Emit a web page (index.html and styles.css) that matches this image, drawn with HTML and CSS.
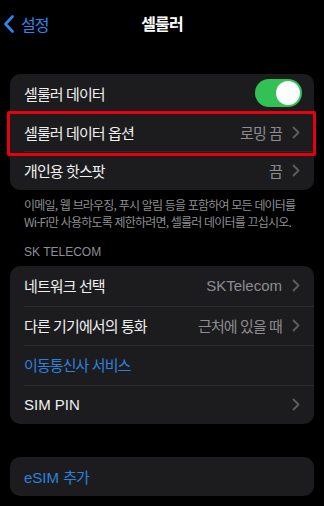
FILE: index.html
```html
<!DOCTYPE html>
<html lang="ko">
<head>
<meta charset="utf-8">
<link rel="stylesheet" href="styles.css">
</head>
<body>
<div class="screen">
  <header class="nav">
    <div class="back">
      <svg class="back-icon" width="12" height="18" viewBox="0 0 12 18"><path d="M9.5 1.5 L2.5 9 L9.5 16.5" fill="none" stroke="#2f86f0" stroke-width="2.6" stroke-linecap="round" stroke-linejoin="round"/></svg>
      <span class="back-label ko">설정</span>
    </div>
    <h1 class="title ko">셀룰러</h1>
    <div></div>
  </header>

  <section class="group g1">
    <div class="row">
      <span class="label ko">셀룰러 데이터</span>
      <span class="toggle"><span class="knob"></span></span>
    </div>
    <div class="row sep highlighted">
      <span class="label ko">셀룰러 데이터 옵션</span>
      <span class="value ko">로밍 끔</span>
      <svg class="chev" width="8" height="13" viewBox="0 0 8 13"><path d="M1.5 1.5 L6.5 6.5 L1.5 11.5" fill="none" stroke="#5d5d62" stroke-width="1.8" stroke-linecap="round" stroke-linejoin="round"/></svg>
      <span class="outline"></span>
    </div>
    <div class="row sep">
      <span class="label ko">개인용 핫스팟</span>
      <span class="value ko">끔</span>
      <svg class="chev" width="8" height="13" viewBox="0 0 8 13"><path d="M1.5 1.5 L6.5 6.5 L1.5 11.5" fill="none" stroke="#5d5d62" stroke-width="1.8" stroke-linecap="round" stroke-linejoin="round"/></svg>
    </div>
  </section>

  <p class="footnote ko">이메일, 웹 브라우징, 푸시 알림 등을 포함하여 모든 데이터를 <span class="nowrap">Wi-Fi만</span> 사용하도록 제한하려면, 셀룰러 데이터를 끄십시오.</p>

  <p class="section-head">SK TELECOM</p>

  <section class="group g2">
    <div class="row">
      <span class="label ko">네트워크 선택</span>
      <span class="value latin">SKTelecom</span>
      <svg class="chev" width="8" height="13" viewBox="0 0 8 13"><path d="M1.5 1.5 L6.5 6.5 L1.5 11.5" fill="none" stroke="#5d5d62" stroke-width="1.8" stroke-linecap="round" stroke-linejoin="round"/></svg>
    </div>
    <div class="row sep">
      <span class="label ko">다른 기기에서의 통화</span>
      <span class="value ko">근처에 있을 때</span>
      <svg class="chev" width="8" height="13" viewBox="0 0 8 13"><path d="M1.5 1.5 L6.5 6.5 L1.5 11.5" fill="none" stroke="#5d5d62" stroke-width="1.8" stroke-linecap="round" stroke-linejoin="round"/></svg>
    </div>
    <div class="row sep">
      <span class="label link ko">이동통신사 서비스</span>
    </div>
    <div class="row sep">
      <span class="label latin">SIM PIN</span>
      <svg class="chev" width="8" height="13" viewBox="0 0 8 13"><path d="M1.5 1.5 L6.5 6.5 L1.5 11.5" fill="none" stroke="#5d5d62" stroke-width="1.8" stroke-linecap="round" stroke-linejoin="round"/></svg>
    </div>
  </section>

  <section class="group g3">
    <div class="row">
      <span class="label link"><span class="latin">eSIM</span> <span class="ko">추가</span></span>
    </div>
  </section>
</div>
</body>
</html>
```

FILE: styles.css
```css
* { box-sizing: border-box; }
html, body {
  margin: 0;
  padding: 0;
  background: #000;
}
body {
  width: 324px;
  height: 506px;
  overflow: hidden;
  font-family: "Liberation Sans", "Noto Sans CJK KR", sans-serif;
  color: #f2f2f2;
}
.ko {
  font-family: "Noto Sans CJK KR", sans-serif;
  letter-spacing: -0.9px;
}
.latin {
  font-family: "Liberation Sans", "Noto Sans CJK KR", sans-serif;
  letter-spacing: 0;
}
.nowrap { white-space: nowrap; }
.screen {
  display: flex;
  flex-direction: column;
}
.nav {
  height: 46px;
  display: grid;
  grid-template-columns: 1fr auto 1fr;
  align-items: center;
}
.back {
  display: flex;
  align-items: center;
  gap: 6px;
  padding-left: 3px;
  padding-top: 1px;
}
.back-label {
  color: #2f86f0;
  font-size: 16px;
}
.title {
  margin: 0;
  font-size: 16px;
  font-weight: 600;
  color: #fff;
}
.group {
  margin: 0 10px;
  background: #1c1c1e;
  border-radius: 10px;
}
.g1 { margin-top: 28px; }
.g2 { margin-top: 6px; }
.g3 { margin-top: 33px; }
.row {
  position: relative;
  height: 39px;
  display: flex;
  align-items: center;
  padding: 0 14px 0 14px;
}
.g1 .row { height: 38.7px; }
.g2 .row { height: 39.5px; }
.row.sep::before {
  content: "";
  position: absolute;
  top: 0;
  left: 14px;
  right: 0;
  height: 1px;
  background: #2c2c2e;
}
.label {
  flex: 1;
  font-size: 15px;
  color: #f0f0f0;
}
.label.link { color: #2f80de; }
.value {
  font-size: 15px;
  color: #8c8c91;
  margin-right: 10px;
}
.chev { flex: none; }
.toggle {
  width: 47px;
  height: 28px;
  border-radius: 14px;
  background: #31c154;
  position: relative;
  margin-right: -2px;
}
.knob {
  position: absolute;
  top: 2px;
  right: 2px;
  width: 24px;
  height: 24px;
  border-radius: 50%;
  background: #fff;
}
.outline {
  position: absolute;
  left: -3px;
  right: -2px;
  top: -2px;
  bottom: -5px;
  border: 3px solid #e8000e;
  border-radius: 2px;
  pointer-events: none;
}
.footnote {
  margin: 6px 12px 0 24px;
  font-size: 12px;
  line-height: 17px;
  color: #8e8e93;
  letter-spacing: -0.8px;
}
.section-head {
  margin: 14px 0 0 24px;
  font-size: 12px;
  line-height: 16px;
  color: #8e8e93;
}
```
